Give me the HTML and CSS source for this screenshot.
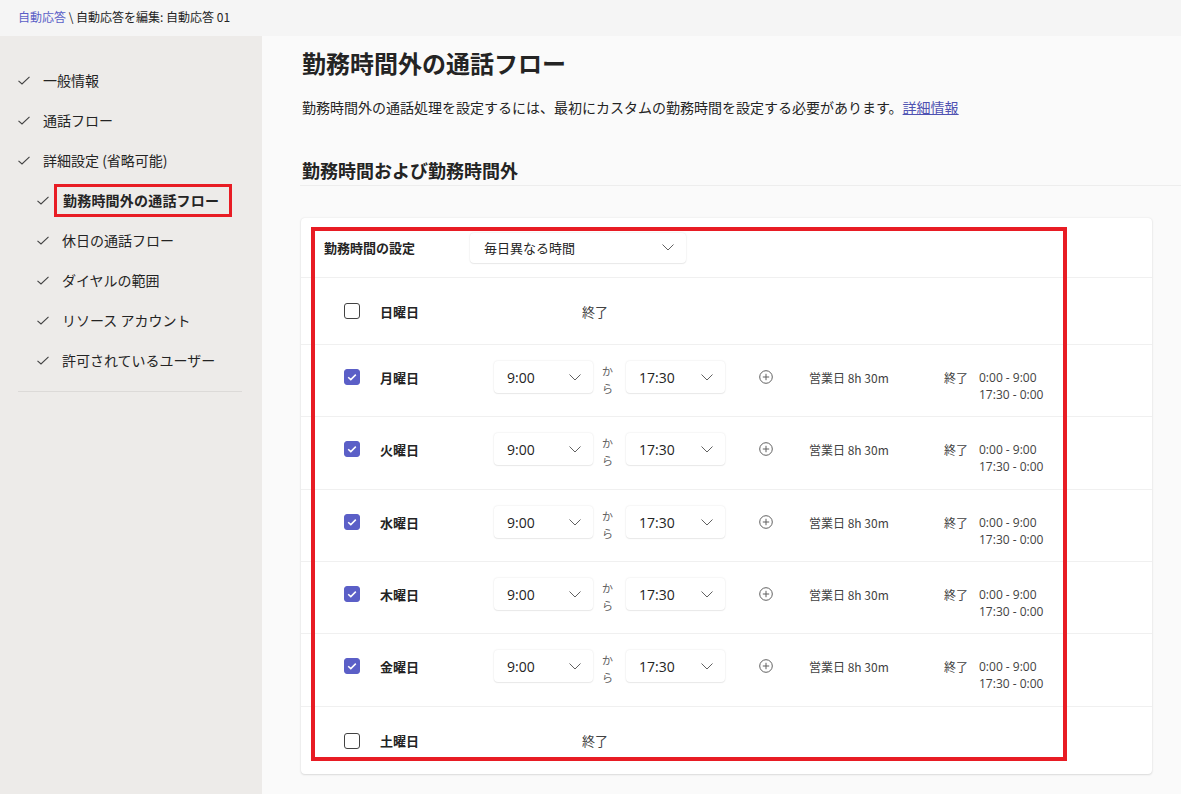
FILE: index.html
```html
<!DOCTYPE html>
<html lang="ja">
<head>
<meta charset="utf-8">
<link rel="stylesheet" href="styles.css">
</head>
<body>
<div class="topbar"><a class="crumb-link">自動応答</a> \ 自動応答を編集: 自動応答 01</div>
<div class="layout">
  <nav class="sidebar">
    <ul class="nav">
      <li class="nav-item"><svg class="chk" viewBox="0 0 12 9"><path d="M0.5 4.8 L4 8 L11.5 0.8"/></svg>一般情報</li>
      <li class="nav-item"><svg class="chk" viewBox="0 0 12 9"><path d="M0.5 4.8 L4 8 L11.5 0.8"/></svg>通話フロー</li>
      <li class="nav-item"><svg class="chk" viewBox="0 0 12 9"><path d="M0.5 4.8 L4 8 L11.5 0.8"/></svg>詳細設定 (省略可能)</li>
      <li class="nav-item sub"><svg class="chk" viewBox="0 0 12 9"><path d="M0.5 4.8 L4 8 L11.5 0.8"/></svg><span class="current">勤務時間外の通話フロー</span></li>
      <li class="nav-item sub"><svg class="chk" viewBox="0 0 12 9"><path d="M0.5 4.8 L4 8 L11.5 0.8"/></svg>休日の通話フロー</li>
      <li class="nav-item sub"><svg class="chk" viewBox="0 0 12 9"><path d="M0.5 4.8 L4 8 L11.5 0.8"/></svg>ダイヤルの範囲</li>
      <li class="nav-item sub"><svg class="chk" viewBox="0 0 12 9"><path d="M0.5 4.8 L4 8 L11.5 0.8"/></svg>リソース アカウント</li>
      <li class="nav-item sub"><svg class="chk" viewBox="0 0 12 9"><path d="M0.5 4.8 L4 8 L11.5 0.8"/></svg>許可されているユーザー</li>
    </ul>
    <div class="nav-divider"></div>
  </nav>
  <main class="main">
    <h1 class="title">勤務時間外の通話フロー</h1>
    <p class="desc">勤務時間外の通話処理を設定するには、最初にカスタムの勤務時間を設定する必要があります。<a class="link">詳細情報</a></p>
    <h2 class="section">勤務時間および勤務時間外</h2>
    <div class="card">
      <div class="card-head">
        <span class="head-label">勤務時間の設定</span>
        <div class="dd dd-wide"><span>毎日異なる時間</span><svg class="chev" viewBox="0 0 12 7"><path d="M0.5 0.5 L6 6 L11.5 0.5"/></svg></div>
      </div>

      <div class="row off">
        <span class="cb"></span>
        <span class="day">日曜日</span>
        <span class="closed-only">終了</span>
      </div>

      <div class="row on">
        <span class="cb checked"><svg viewBox="0 0 10 8"><path d="M1.2 4.2 L3.8 6.6 L8.8 1.6"/></svg></span>
        <span class="day">月曜日</span>
        <div class="dd dd-time"><span>9:00</span><svg class="chev" viewBox="0 0 12 7"><path d="M0.5 0.5 L6 6 L11.5 0.5"/></svg></div>
        <span class="kara">か<br>ら</span>
        <div class="dd dd-time"><span>17:30</span><svg class="chev" viewBox="0 0 12 7"><path d="M0.5 0.5 L6 6 L11.5 0.5"/></svg></div>
        <span class="plus-cell"><svg class="plus" viewBox="0 0 14 14"><circle cx="7" cy="7" r="6.3"/><path d="M7 3.8 V10.2 M3.8 7 H10.2"/></svg></span>
        <span class="hours">営業日 8h 30m</span>
        <div class="offhours"><span class="off-label">終了</span><span class="times">0:00 - 9:00<br>17:30 - 0:00</span></div>
      </div>

      <div class="row on tall">
        <span class="cb checked"><svg viewBox="0 0 10 8"><path d="M1.2 4.2 L3.8 6.6 L8.8 1.6"/></svg></span>
        <span class="day">火曜日</span>
        <div class="dd dd-time"><span>9:00</span><svg class="chev" viewBox="0 0 12 7"><path d="M0.5 0.5 L6 6 L11.5 0.5"/></svg></div>
        <span class="kara">か<br>ら</span>
        <div class="dd dd-time"><span>17:30</span><svg class="chev" viewBox="0 0 12 7"><path d="M0.5 0.5 L6 6 L11.5 0.5"/></svg></div>
        <span class="plus-cell"><svg class="plus" viewBox="0 0 14 14"><circle cx="7" cy="7" r="6.3"/><path d="M7 3.8 V10.2 M3.8 7 H10.2"/></svg></span>
        <span class="hours">営業日 8h 30m</span>
        <div class="offhours"><span class="off-label">終了</span><span class="times">0:00 - 9:00<br>17:30 - 0:00</span></div>
      </div>

      <div class="row on">
        <span class="cb checked"><svg viewBox="0 0 10 8"><path d="M1.2 4.2 L3.8 6.6 L8.8 1.6"/></svg></span>
        <span class="day">水曜日</span>
        <div class="dd dd-time"><span>9:00</span><svg class="chev" viewBox="0 0 12 7"><path d="M0.5 0.5 L6 6 L11.5 0.5"/></svg></div>
        <span class="kara">か<br>ら</span>
        <div class="dd dd-time"><span>17:30</span><svg class="chev" viewBox="0 0 12 7"><path d="M0.5 0.5 L6 6 L11.5 0.5"/></svg></div>
        <span class="plus-cell"><svg class="plus" viewBox="0 0 14 14"><circle cx="7" cy="7" r="6.3"/><path d="M7 3.8 V10.2 M3.8 7 H10.2"/></svg></span>
        <span class="hours">営業日 8h 30m</span>
        <div class="offhours"><span class="off-label">終了</span><span class="times">0:00 - 9:00<br>17:30 - 0:00</span></div>
      </div>

      <div class="row on">
        <span class="cb checked"><svg viewBox="0 0 10 8"><path d="M1.2 4.2 L3.8 6.6 L8.8 1.6"/></svg></span>
        <span class="day">木曜日</span>
        <div class="dd dd-time"><span>9:00</span><svg class="chev" viewBox="0 0 12 7"><path d="M0.5 0.5 L6 6 L11.5 0.5"/></svg></div>
        <span class="kara">か<br>ら</span>
        <div class="dd dd-time"><span>17:30</span><svg class="chev" viewBox="0 0 12 7"><path d="M0.5 0.5 L6 6 L11.5 0.5"/></svg></div>
        <span class="plus-cell"><svg class="plus" viewBox="0 0 14 14"><circle cx="7" cy="7" r="6.3"/><path d="M7 3.8 V10.2 M3.8 7 H10.2"/></svg></span>
        <span class="hours">営業日 8h 30m</span>
        <div class="offhours"><span class="off-label">終了</span><span class="times">0:00 - 9:00<br>17:30 - 0:00</span></div>
      </div>

      <div class="row on tall">
        <span class="cb checked"><svg viewBox="0 0 10 8"><path d="M1.2 4.2 L3.8 6.6 L8.8 1.6"/></svg></span>
        <span class="day">金曜日</span>
        <div class="dd dd-time"><span>9:00</span><svg class="chev" viewBox="0 0 12 7"><path d="M0.5 0.5 L6 6 L11.5 0.5"/></svg></div>
        <span class="kara">か<br>ら</span>
        <div class="dd dd-time"><span>17:30</span><svg class="chev" viewBox="0 0 12 7"><path d="M0.5 0.5 L6 6 L11.5 0.5"/></svg></div>
        <span class="plus-cell"><svg class="plus" viewBox="0 0 14 14"><circle cx="7" cy="7" r="6.3"/><path d="M7 3.8 V10.2 M3.8 7 H10.2"/></svg></span>
        <span class="hours">営業日 8h 30m</span>
        <div class="offhours"><span class="off-label">終了</span><span class="times">0:00 - 9:00<br>17:30 - 0:00</span></div>
      </div>

      <div class="row off last">
        <span class="cb"></span>
        <span class="day">土曜日</span>
        <span class="closed-only">終了</span>
      </div>

      <div class="annot"></div>
    </div>
  </main>
</div>
</body>
</html>
```

FILE: styles.css
```css
* { box-sizing: border-box; }
html, body { margin: 0; padding: 0; }
body {
  width: 1181px;
  height: 794px;
  overflow: hidden;
  font-family: "Noto Sans CJK JP", "Noto Sans", sans-serif;
  color: #242424;
  background: #fafafa;
}
.topbar {
  height: 36px;
  background: #f5f5f5;
  padding: 0 18px;
  font-size: 12px;
  line-height: 34px;
  color: #242424;
}
.crumb-link { color: #5b5fc7; }
.layout {
  display: flex;
  height: 758px;
}
.sidebar {
  width: 262px;
  flex: none;
  background: #edebe9;
  padding: 24px 20px 0 18px;
}
.nav { list-style: none; margin: 0; padding: 0; }
.nav-item {
  display: flex;
  align-items: center;
  height: 40px;
  font-size: 14px;
  color: #242424;
}
.nav-item.sub { padding-left: 19px; }
.chk {
  width: 12px;
  height: 9px;
  margin-right: 13px;
  fill: none;
  stroke: #424242;
  stroke-width: 1.1;
  flex: none;
}
.current {
  font-weight: 700;
  border: 3px solid #e81c24;
  margin-left: -8px;
  padding: 2px 10px 3px 6px;
  line-height: 22px;
  letter-spacing: 0.2px;
}
.nav-divider {
  margin-top: 11px;
  height: 1px;
  background: #dcdad8;
}
.main {
  flex: 1;
  padding: 11px 0 0 40px;
}
.title {
  margin: 0;
  font-size: 24px;
  line-height: 32px;
  font-weight: 700;
}
.desc {
  margin: 18px 0 0;
  font-size: 14px;
  line-height: 20px;
}
.link { color: #4f52b2; text-decoration: underline; }
.section {
  margin: 40px 0 0 0;
  font-size: 18px;
  line-height: 26px;
  font-weight: 700;
  padding-bottom: 2px;
  border-bottom: 1px solid #ededed;
  margin-left: -2px;
  padding-left: 2px;
}
.card {
  position: relative;
  margin: 32px 29px 0 -1px;
  background: #fff;
  border-radius: 4px;
  box-shadow: 0 0 2px rgba(0,0,0,0.10), 0 1px 2px rgba(0,0,0,0.10);
}
.card-head {
  display: flex;
  align-items: center;
  height: 60px;
  padding-left: 23px;
  border-bottom: 1px solid #f0f0f0;
}
.head-label {
  width: 146px;
  font-size: 13px;
  font-weight: 700;
}
.dd {
  display: flex;
  align-items: center;
  justify-content: space-between;
  background: #fff;
  border-radius: 4px;
  box-shadow: 0 0 2px rgba(0,0,0,0.12), 0 1px 1px rgba(0,0,0,0.06);
  font-size: 13px;
  color: #242424;
}
.dd-wide {
  width: 216px;
  height: 30px;
  padding: 0 12px 0 14px;
}
.dd-time {
  width: 99px;
  height: 32px;
  padding: 0 12px 0 13px;
  font-family: "Open Sans", "Noto Sans CJK JP", sans-serif;
  font-size: 14px;
}
.chev {
  width: 12px;
  height: 7px;
  fill: none;
  stroke: #616161;
  stroke-width: 1;
}
.row {
  display: flex;
  padding-left: 43px;
  border-bottom: 1px solid #f0f0f0;
}
.row.last { border-bottom: none; height: 66px; }
.row.off {
  height: 67px;
  align-items: center;
}
.row.on {
  height: 72px;
  align-items: flex-start;
  padding-top: 16px;
}
.row.on.tall { height: 73px; }
.row.on > * { height: 32px; display: flex; align-items: center; }
.cb {
  width: 16px;
  height: 16px;
  border: 1px solid #424242;
  border-radius: 3px;
  margin-right: 20px;
  flex: none;
}
.row.on > .cb { height: 16px; margin-top: 8px; }
.cb.checked {
  background: #5b5fc7;
  border-color: #5b5fc7;
  display: flex;
  align-items: center;
  justify-content: center;
}
.cb.checked svg {
  width: 10px;
  height: 8px;
  fill: none;
  stroke: #fff;
  stroke-width: 1.5;
}
.day {
  width: 114px;
  font-size: 13px;
  font-weight: 700;
}
.closed-only {
  margin-left: 88px;
  font-size: 13px;
  color: #424242;
}
.row.on > .kara {
  width: 33px;
  padding-left: 9px;
  font-size: 11px;
  line-height: 17px;
  color: #616161;
  height: 40px;
  margin-top: -1px;
}
.plus-cell {
  width: 84px;
  padding-left: 34px;
}
.plus {
  width: 14px;
  height: 14px;
  fill: none;
  stroke: #616161;
  stroke-width: 1;
}
.hours {
  width: 135px;
  font-size: 12px;
  color: #424242;
  font-family: "Noto Sans CJK JP", sans-serif;
}
.row.on > .offhours {
  display: flex;
  align-items: flex-start;
  height: 40px;
  padding-top: 8px;
  font-size: 12px;
  line-height: 17px;
  color: #424242;
}
.off-label { width: 35px; }
.times { font-family: "Open Sans", "Noto Sans CJK JP", sans-serif; }
.annot {
  position: absolute;
  left: 10px;
  top: 9px;
  width: 756px;
  height: 534px;
  border: 4px solid #e81c24;
  pointer-events: none;
}
```
